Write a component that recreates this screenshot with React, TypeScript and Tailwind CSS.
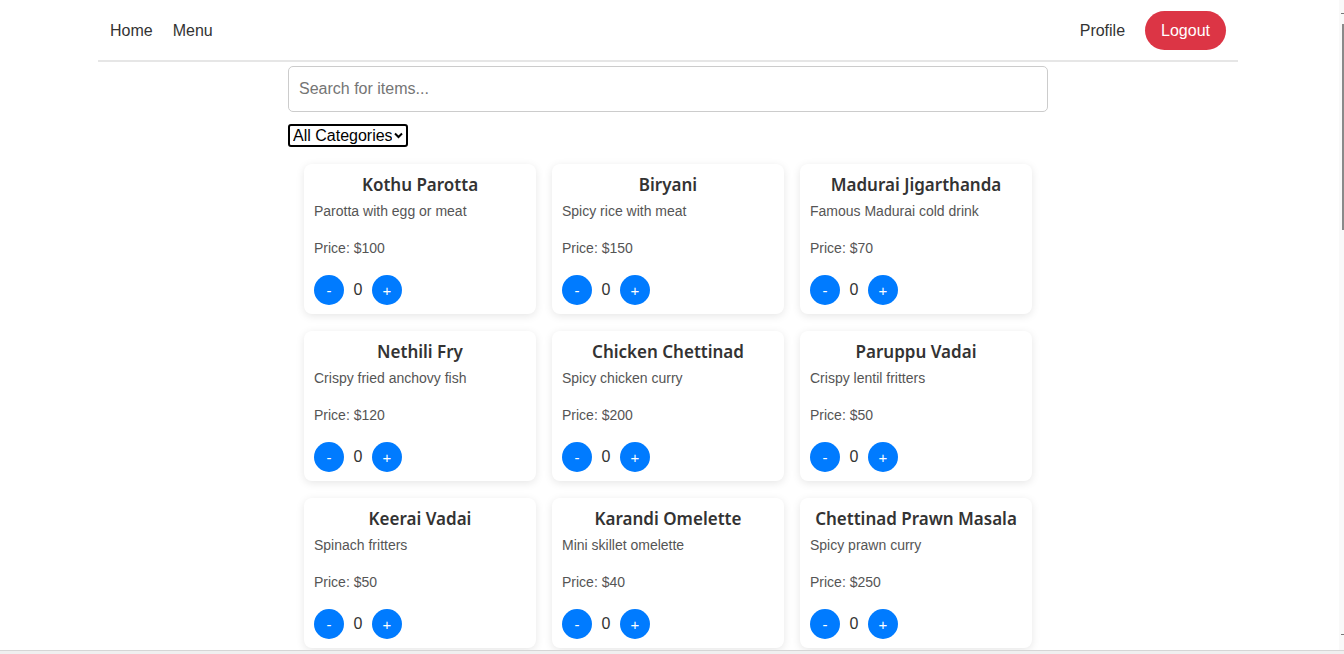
import React from "react";

type Item = { name: string; desc: string; price: number };

const items: Item[] = [
  { name: "Kothu Parotta", desc: "Parotta with egg or meat", price: 100 },
  { name: "Biryani", desc: "Spicy rice with meat", price: 150 },
  { name: "Madurai Jigarthanda", desc: "Famous Madurai cold drink", price: 70 },
  { name: "Nethili Fry", desc: "Crispy fried anchovy fish", price: 120 },
  { name: "Chicken Chettinad", desc: "Spicy chicken curry", price: 200 },
  { name: "Paruppu Vadai", desc: "Crispy lentil fritters", price: 50 },
  { name: "Keerai Vadai", desc: "Spinach fritters", price: 50 },
  { name: "Karandi Omelette", desc: "Mini skillet omelette", price: 40 },
  { name: "Chettinad Prawn Masala", desc: "Spicy prawn curry", price: 250 },
];

function Card({ item }: { item: Item }) {
  return (
    <div className="bg-white rounded-[8px] shadow-[0_2px_8px_rgba(0,0,0,0.1)] pt-[10px] pb-[9px] px-[10px] flex flex-col">
      <h3 className="text-center text-[17px] leading-[21px] font-semibold text-[#333] mb-[6px] font-['Noto_Sans',sans-serif]">
        {item.name}
      </h3>
      <p className="text-[14px] leading-[21px] text-[#555] mb-[16px]">{item.desc}</p>
      <p className="text-[14px] leading-[21px] text-[#555] mb-[16px]">Price: ${item.price}</p>
      <div className="flex items-center h-[30px]">
        <button className="w-[30px] h-[30px] rounded-full bg-[#007bff] text-white text-[15px] leading-none flex items-center justify-center">
          -
        </button>
        <span className="w-[28px] text-center text-[16px] text-[#333]">0</span>
        <button className="w-[30px] h-[30px] rounded-full bg-[#007bff] text-white text-[15px] leading-none flex items-center justify-center">
          +
        </button>
      </div>
    </div>
  );
}

export default function App() {
  return (
    <div className="w-[1344px] h-[654px] overflow-hidden flex flex-col bg-white font-['Liberation_Sans',Arial,sans-serif]">
      <div className="flex flex-1 min-h-0">
        <div className="w-[1336px] h-full overflow-hidden bg-white">
          <nav className="w-[1140px] mx-auto h-[62px] border-b-2 border-[#e6e6e6] flex items-center justify-between px-[12px]">
            <div className="flex items-center gap-[20px] text-[16px] text-[#333] mt-[2px]">
              <span>Home</span>
              <span>Menu</span>
            </div>
            <div className="flex items-center gap-[20px]">
              <span className="text-[16px] text-[#333] mt-[2px]">Profile</span>
              <button className="h-[39px] px-[16px] pt-[2px] rounded-full bg-[#dc3545] text-white text-[16px]">
                Logout
              </button>
            </div>
          </nav>
          <div className="w-[760px] mx-auto pt-[4px]">
            <input
              type="text"
              placeholder="Search for items..."
              className="w-full h-[46px] border border-[#ccc] rounded-[5px] px-[10px] text-[16px] placeholder:text-[#757575] outline-none"
            />
            <div className="mt-[12px] flex items-center h-[23px] w-[120px] border-2 border-black rounded-[3px] pl-[3px] pr-[3px]">
              <select className="appearance-none bg-transparent text-[16px] text-black flex-1 min-w-0 outline-none leading-[19px]">
                <option>All Categories</option>
              </select>
              <svg width="9" height="7" viewBox="0 0 9 7" className="shrink-0 ml-[2px]">
                <path d="M1 1.5 L4.5 5 L8 1.5" stroke="black" strokeWidth="2" fill="none" />
              </svg>
            </div>
            <div className="grid grid-cols-3 gap-x-[16px] gap-y-[17px] px-[16px] mt-[17px]">
              {items.map((it) => (
                <Card key={it.name} item={it} />
              ))}
            </div>
          </div>
        </div>
        <div className="w-[8px] h-full flex">
          <div className="w-[3px] bg-white" />
          <div className="flex-1 bg-[#f9f9f9] flex flex-col items-end">
            <div className="h-[24px] w-full flex items-center justify-end">
              <span className="w-[3px] h-[1px] bg-[#777] mt-[2px]" />
            </div>
            <div className="w-[2px] h-[206px] bg-[#8a8a8a]" />
            <div className="flex-1" />
            <div className="h-[16px] w-full flex items-start justify-end">
              <span className="w-[3px] h-[1px] bg-[#777]" />
            </div>
          </div>
        </div>
      </div>
      <div className="h-[4px] border-t border-[#d6d6d6] bg-[#f0f0f0]" />
    </div>
  );
}
